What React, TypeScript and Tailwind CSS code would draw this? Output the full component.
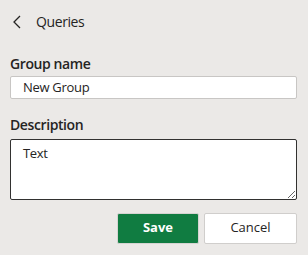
import React from "react";

export default function App() {
  return (
    <div
      className="w-[308px] h-[255px] bg-[#ebe9e7] text-[#252423] overflow-hidden"
      style={{ fontFamily: '"Open Sans", "Noto Sans", sans-serif' }}
    >
      <div className="flex items-center h-[44px] pl-[13px]">
        <svg width="8" height="14" viewBox="0 0 8 14" className="mr-[15px]">
          <path d="M7 1 L1 7 L7 13" fill="none" stroke="#252423" strokeWidth="1.3" />
        </svg>
        <span className="text-[14px] leading-none tracking-[-0.4px]">Queries</span>
      </div>
      <div className="pl-[10px] pr-[11px]">
        <div className="mt-[10px] text-[14px] font-semibold leading-[20px] tracking-[-0.4px]">Group name</div>
        <input
          defaultValue="New Group"
          className="mt-[1px] w-full h-[23px] bg-white border border-[#c8c6c4] rounded-[2px] pl-[12px] text-[13px] tracking-[-0.3px] outline-none"
        />
        <div className="mt-[16px] text-[14px] font-semibold leading-[20px] tracking-[-0.4px]">Description</div>
        <textarea
          defaultValue="Text"
          className="mt-[4px] block w-full h-[61px] bg-white border border-[#323130] rounded-[2px] pl-[12px] pt-[5px] text-[13px] leading-[17px] tracking-[-0.3px] outline-none resize-y"
        />
        <div className="mt-[13px] flex justify-end gap-[5px]">
          <button className="w-[82px] h-[31px] bg-[#107c41] border border-[#d6d4d2] rounded-[2px] text-white text-[13px] font-bold">
            Save
          </button>
          <button className="w-[93px] h-[31px] bg-white border border-[#d0cecc] rounded-[2px] text-[13px]">
            Cancel
          </button>
        </div>
      </div>
    </div>
  );
}
